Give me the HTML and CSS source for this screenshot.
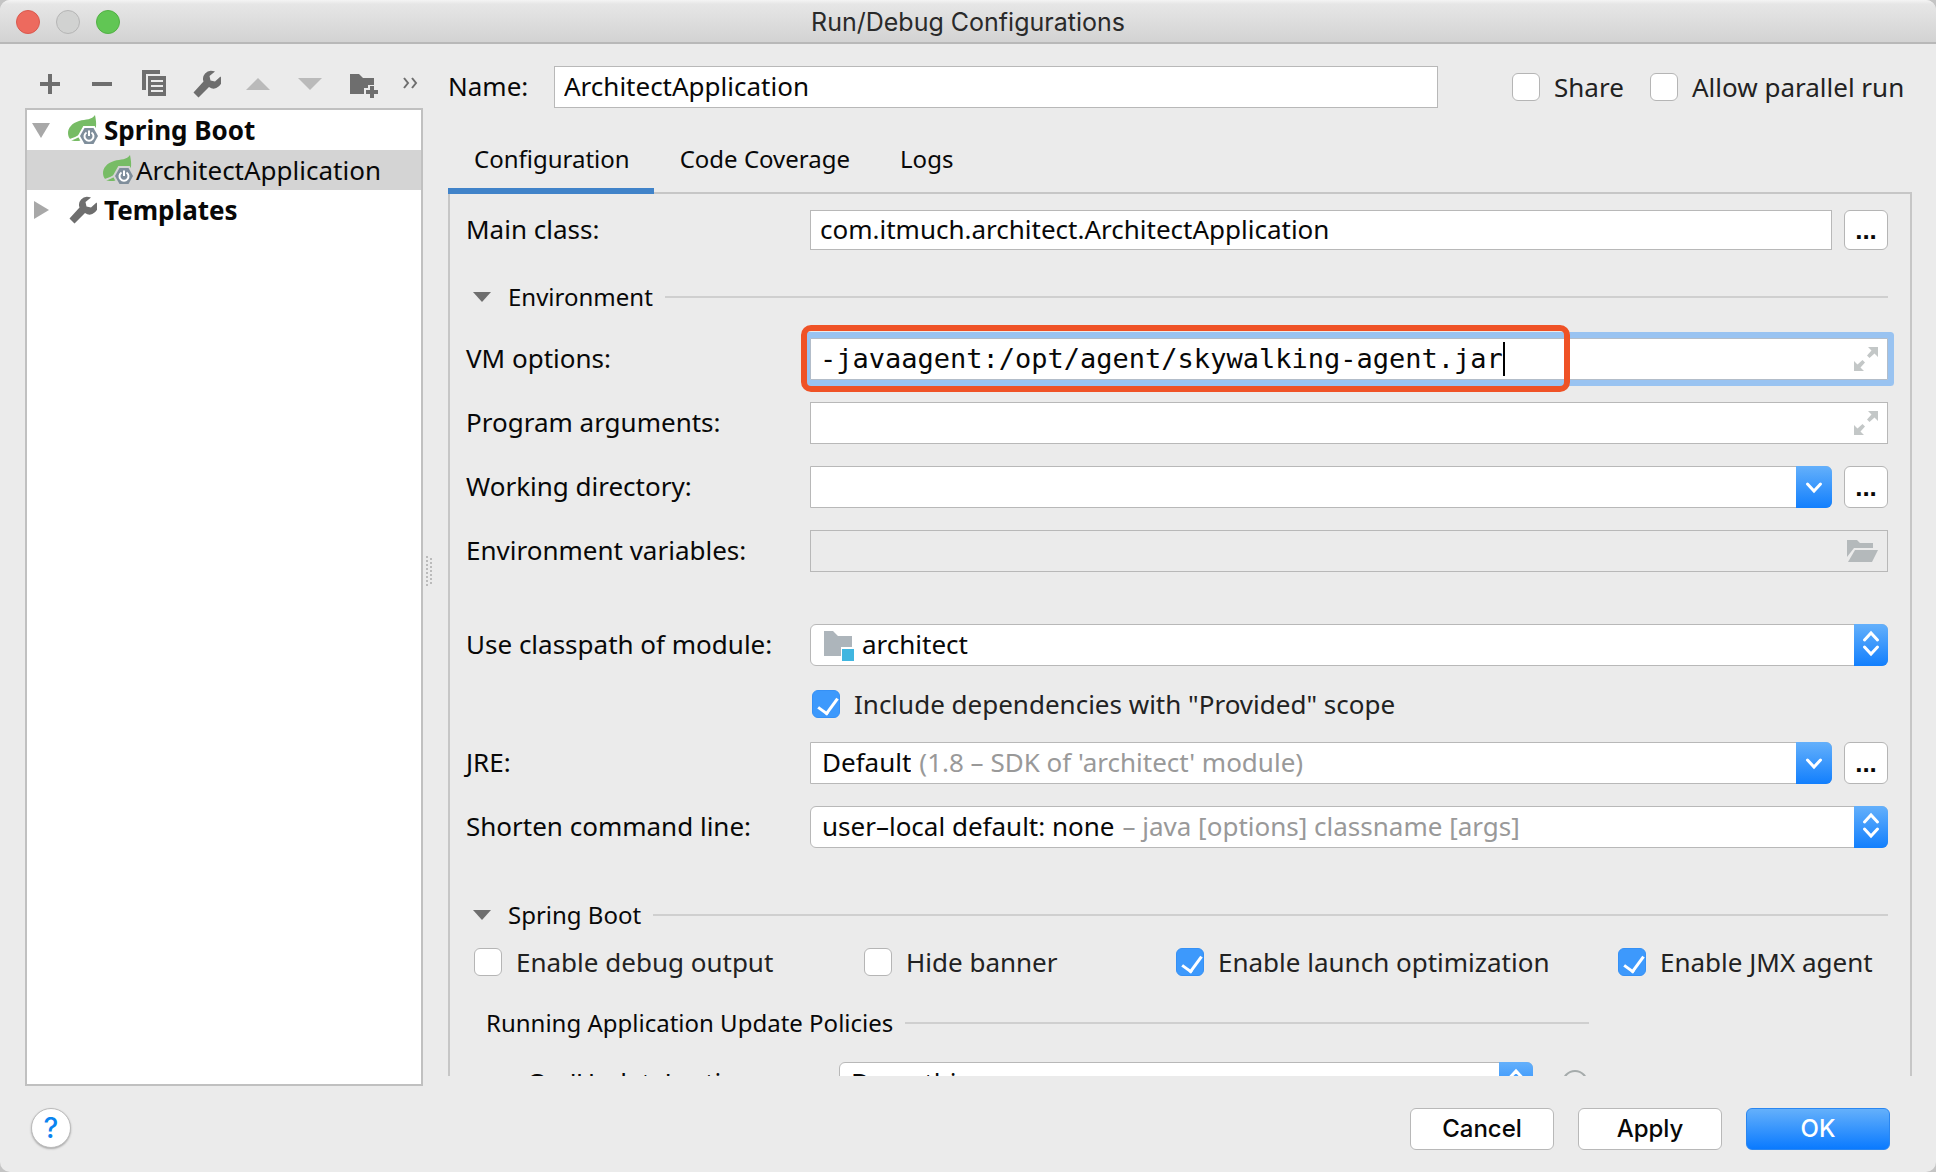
FILE: index.html
```html
<!DOCTYPE html>
<html lang="en">
<head>
    <meta charset="UTF-8">
    <meta name="viewport" content="width=device-width, initial-scale=1.0">
    <title>Run/Debug Configurations</title>
    <link rel="stylesheet" href="styles.css">
</head>
<body>
    <!-- Shared icons -->
    <svg class="sprite" aria-hidden="true">
        <symbol id="wrench" viewBox="0 0 28 28">
            <path d="M20 1 A8 8 0 0 0 10.500 11.500 L0.500 22.500 L5.500 27.500 L16 17 A8 8 0 0 0 27.500 6.500 L22 11.500 L17.500 10.500 L16.500 6 L22 1.500 Z"/>
        </symbol>
        <symbol id="spring" viewBox="0 0 32 32">
            <path class="leaf" d="M27 1 C24 6 18 5 11 7 C4 9 0 14 0 19 C0 22 1 24 3 26 C6 28 20 28 27 17 C29 12 28 6 27 1 Z"/>
            <path class="vein" d="M2 26 C8 24 13 22 17 17"/>
            <path class="hex-gap" d="M16.500 14 H25.500 L30 22 L25.500 30 H16.500 L12 22 Z"/>
            <path class="hex" d="M16.500 14 H25.500 L30 22 L25.500 30 H16.500 L12 22 Z"/>
            <path class="power" d="M18.500 18.500 A4.500 4.500 0 1 0 23.500 18.500 M21 16.500 V22"/>
        </symbol>
        <symbol id="expand" viewBox="0 0 24 24">
            <path d="M14 0 H24 V10 L20.500 6.500 L15.500 11 L13 8.500 L17.500 3.500 Z M0 14 L3.500 17.500 L8.500 13 L11 15.500 L6.500 20.500 L10 24 H0 Z"/>
        </symbol>
        <symbol id="down" viewBox="0 0 18 42">
            <path d="M2.500 18 L9 25 L15.500 18"/>
        </symbol>
        <symbol id="updown" viewBox="0 0 18 42">
            <path d="M2.500 16 L9 9 L15.500 16 M2.500 23 L9 30 L15.500 23"/>
        </symbol>
    </svg>

    <div class="window">
        <header class="titlebar">
            <div class="lights">
                <button class="light red" aria-label="Close"></button>
                <button class="light gray" aria-label="Minimize" disabled></button>
                <button class="light green" aria-label="Zoom"></button>
            </div>
            <h1>Run/Debug Configurations</h1>
        </header>

        <div class="content">
            <aside class="sidebar">
                <div class="toolbar">
                    <button class="tool" aria-label="Add"><svg viewBox="0 0 32 32"><path d="M14 6 H18 V14 H26 V18 H18 V26 H14 V18 H6 V14 H14 Z"/></svg></button>
                    <button class="tool" aria-label="Remove"><svg viewBox="0 0 32 32"><path d="M6 14 H26 V18 H6 Z"/></svg></button>
                    <button class="tool" aria-label="Copy"><svg viewBox="0 0 32 32"><path d="M4 2 H22 V6 H8 V22 H4 Z"/><path fill-rule="evenodd" d="M10 8 H28 V28 H10 Z M13 12 V14 H25 V12 Z M13 17 V19 H25 V17 Z M13 22 V24 H25 V22 Z"/></svg></button>
                    <button class="tool" aria-label="Edit templates"><svg viewBox="0 0 32 32"><use href="#wrench" x="3" y="2" width="28" height="28"/></svg></button>
                    <button class="tool" aria-label="Move up" disabled><svg viewBox="0 0 32 32"><path d="M4 22 L16 10 L28 22 Z"/></svg></button>
                    <button class="tool" aria-label="Move down" disabled><svg viewBox="0 0 32 32"><path d="M4 10 H28 L16 22 Z"/></svg></button>
                    <button class="tool" aria-label="Create folder"><svg viewBox="0 0 32 32"><path d="M4 6 H13 L17 10 H28 V17 H22 V20 H18 V26 H4 Z"/><path d="M24 18 H28 V22 H32 V26 H28 V30 H24 V26 H20 V22 H24 Z"/></svg></button>
                    <button class="tool more" aria-label="More"><svg viewBox="0 0 16 32"><path d="M2 10 L6 15 L2 20 M10 10 L14 15 L10 20"/></svg></button>
                </div>
                <ul class="tree">
                    <li class="node">
                        <svg class="arrow" viewBox="0 0 18 18"><path d="M0 2 H18 L9 17 Z"/></svg>
                        <svg class="node-icon"><use href="#spring"/></svg>
                        <b>Spring Boot</b>
                    </li>
                    <li class="node child selected">
                        <svg class="node-icon"><use href="#spring"/></svg>
                        <span>ArchitectApplication</span>
                    </li>
                    <li class="node">
                        <svg class="arrow" viewBox="0 0 18 18"><path d="M2 0 L17 9 L2 18 Z"/></svg>
                        <svg class="node-icon wrench" viewBox="0 0 32 32"><use href="#wrench" x="1" y="2" width="28" height="28"/></svg>
                        <b>Templates</b>
                    </li>
                </ul>
            </aside>

            <div class="splitter">
                <svg width="8" height="30" viewBox="0 0 8 30"><path d="M2 0 V30 M6 2 V30"/></svg>
            </div>

            <main class="main">
                <div class="name-row">
                    <label for="name">Name:</label>
                    <input class="input" id="name" type="text" value="ArchitectApplication">
                    <div class="name-checks">
                        <label class="check"><input type="checkbox">Share</label>
                        <label class="check"><input type="checkbox">Allow parallel run</label>
                    </div>
                </div>

                <nav class="tabs">
                    <button class="tab active">Configuration</button>
                    <button class="tab">Code Coverage</button>
                    <button class="tab">Logs</button>
                </nav>

                <section class="panel">
                    <div class="row main-class">
                        <label for="main-class">Main class:</label>
                        <div class="field-group">
                            <input class="input" id="main-class" type="text" value="com.itmuch.architect.ArchitectApplication">
                            <button class="browse" aria-label="Browse main class">...</button>
                        </div>
                    </div>

                    <h2 class="section-title">
                        <svg class="fold" viewBox="0 0 18 12"><path d="M0 1 H18 L9 11 Z"/></svg>
                        Environment
                    </h2>

                    <div class="rows">
                        <div class="row">
                            <label for="vm">VM options:</label>
                            <div class="field focused">
                                <input class="mono" id="vm" type="text" value="-javaagent:/opt/agent/skywalking-agent.jar">
                                <span class="caret"></span>
                                <button class="field-icon" aria-label="Expand"><svg width="24" height="24"><use href="#expand"/></svg></button>
                                <span class="highlight"></span>
                            </div>
                        </div>
                        <div class="row">
                            <label for="args">Program arguments:</label>
                            <div class="field">
                                <input class="fill" id="args" type="text">
                                <button class="field-icon" aria-label="Expand"><svg width="24" height="24"><use href="#expand"/></svg></button>
                            </div>
                        </div>
                        <div class="row">
                            <label for="dir">Working directory:</label>
                            <div class="field-group">
                                <div class="field combo">
                                    <input class="fill" id="dir" type="text">
                                    <span class="stepper wide"><svg width="18" height="42"><use href="#down"/></svg></span>
                                </div>
                                <button class="browse" aria-label="Browse working directory">...</button>
                            </div>
                        </div>
                        <div class="row">
                            <label for="env">Environment variables:</label>
                            <div class="field disabled">
                                <input class="fill" id="env" type="text">
                                <button class="field-icon" aria-label="Edit variables">
                                    <svg class="folder-open" width="32" height="26" viewBox="0 0 32 26"><path d="M1 2 H11 L14 5 H27 V10 H8 L1 19 Z"/><path d="M9 12 H32 L26 24 H2 Z"/></svg>
                                </button>
                            </div>
                        </div>
                    </div>

                    <div class="row classpath">
                        <label for="module">Use classpath of module:</label>
                        <div class="field popup">
                            <svg class="module" width="32" height="32" viewBox="0 0 32 32"><path d="M1 2 H10 L15 7 H29 V18 H18 V27 H1 Z"/><path class="badge" d="M19 20 H31 V34 H19 Z"/></svg>
                            <select id="module"><option>architect</option></select>
                            <span class="stepper"><svg width="18" height="42"><use href="#updown"/></svg></span>
                        </div>
                    </div>
                    <div class="row provided">
                        <label class="check"><input type="checkbox" checked>Include dependencies with "Provided" scope</label>
                    </div>
                    <div class="rows">
                        <div class="row">
                            <label for="jre">JRE:</label>
                            <div class="field-group">
                                <div class="field combo">
                                    <select id="jre"><option>Default</option></select>
                                    <span class="hint">(1.8 – SDK of 'architect' module)</span>
                                    <span class="stepper wide"><svg width="18" height="42"><use href="#down"/></svg></span>
                                </div>
                                <button class="browse" aria-label="Browse JRE">...</button>
                            </div>
                        </div>
                        <div class="row">
                            <label for="shorten">Shorten command line:</label>
                            <div class="field popup">
                                <select id="shorten"><option>user–local default: none</option></select>
                                <span class="hint">– java [options] classname [args]</span>
                                <span class="stepper"><svg width="18" height="42"><use href="#updown"/></svg></span>
                            </div>
                        </div>
                    </div>

                    <h2 class="section-title spring-title">
                        <svg class="fold" viewBox="0 0 18 12"><path d="M0 1 H18 L9 11 Z"/></svg>
                        Spring Boot
                    </h2>
                    <div class="checks">
                        <label class="check"><input type="checkbox">Enable debug output</label>
                        <label class="check"><input type="checkbox">Hide banner</label>
                        <label class="check"><input type="checkbox" checked>Enable launch optimization</label>
                        <label class="check"><input type="checkbox" checked>Enable JMX agent</label>
                    </div>

                    <div class="policies">
                        <h3 class="section-title">Running Application Update Policies</h3>
                        <div class="policy">
                            <label for="update">On 'Update' action:</label>
                            <div class="field popup">
                                <select id="update"><option>Do nothing</option></select>
                                <span class="stepper"><svg width="18" height="42"><use href="#updown"/></svg></span>
                            </div>
                            <svg class="info" width="28" height="28" viewBox="0 0 28 28"><circle cx="14" cy="14" r="12"/><path d="M10 12 C10 7 18 7 18 12 C18 14 14 14 14 17 M14 19 V21"/></svg>
                        </div>
                    </div>
                </section>
            </main>
        </div>

        <footer class="footer">
            <button class="help" aria-label="Help">?</button>
            <div class="actions">
                <button class="btn">Cancel</button>
                <button class="btn">Apply</button>
                <button class="btn primary">OK</button>
            </div>
        </footer>
    </div>
</body>
</html>
```

FILE: styles.css
```css
* {
    box-sizing: border-box;
}
body {
    margin: 0;
    background-color: #c4c4c4;
    color: #080808;
    font-family: "Noto Sans", "Open Sans", sans-serif;
    font-size: 26px;
    line-height: 30px;
}
button, input, select {
    font: inherit;
    color: inherit;
    margin: 0;
    padding: 0;
    border: none;
    background: none;
}
h1, h2, h3, ul {
    margin: 0;
    padding: 0;
    font-weight: normal;
}
svg {
    display: block;
    flex: none;
}
.sprite {
    position: absolute;
    width: 0;
    height: 0;
}
.window {
    display: flex;
    flex-direction: column;
    height: 100vh;
    background-color: #ebebeb;
    border-radius: 10px;
    overflow: hidden;
}

/* Title bar */
.titlebar {
    display: grid;
    grid-template-columns: 1fr auto 1fr;
    align-items: center;
    height: 44px;
    padding: 2px 16px 0;
    background: linear-gradient(#f4f4f4, #e6e6e6 10%, #d3d3d3);
    border-bottom: 2px solid #b8b8b8;
}
.titlebar h1 {
    font-family: Inter, "Liberation Sans", sans-serif;
    font-size: 25px;
    color: #2a2a2a;
}
.lights {
    display: flex;
    gap: 16px;
}
.light {
    width: 24px;
    height: 24px;
    border-radius: 50%;
    border: 1px solid;
}
.red {
    background-color: #ed6a5e;
    border-color: #d9594e;
}
.gray {
    background-color: #d1d2d1;
    border-color: #b5b5b5;
}
.green {
    background-color: #61c654;
    border-color: #52b045;
}

/* Left side */
.content {
    display: flex;
    flex: 1;
    min-height: 0;
    padding: 0 24px 0 25px;
}
.sidebar {
    display: flex;
    flex-direction: column;
    width: 398px;
    padding-top: 24px;
}
.toolbar {
    display: flex;
    gap: 20px;
    padding-left: 9px;
    margin-bottom: 8px;
}
.tool {
    width: 32px;
    height: 32px;
}
.tool svg {
    width: 100%;
    height: 100%;
    fill: #6e6e6e;
}
.tool:disabled svg {
    fill: #bababa;
}
.more {
    width: 16px;
    margin-left: 4px;
}
.more svg {
    fill: none;
    stroke: #6e6e6e;
    stroke-width: 2;
}
.tree {
    flex: 1;
    list-style: none;
    background-color: #fff;
    border: 2px solid #c0c0c0;
}
.node {
    --row: #fff;
    display: flex;
    align-items: center;
    height: 40px;
    padding-left: 5px;
    background-color: var(--row);
}
.child {
    padding-left: 76px;
}
.selected {
    --row: #d4d4d4;
}
.arrow {
    width: 18px;
    height: 18px;
    margin-right: 18px;
    fill: #a8a8a8;
}
.node-icon {
    width: 32px;
    height: 32px;
    margin-right: 4px;
}
.child .node-icon {
    margin-right: 1px;
}
.wrench {
    fill: #6e6e6e;
}
.leaf {
    fill: #77bc65;
}
.vein {
    fill: none;
    stroke: var(--row);
    stroke-width: 2;
}
.hex-gap {
    fill: var(--row);
    stroke: var(--row);
    stroke-width: 4;
}
.hex {
    fill: #7f8e9b;
}
.power {
    fill: none;
    stroke: #fff;
    stroke-width: 2;
}
.splitter {
    display: flex;
    align-items: center;
    width: 25px;
    padding: 12px 0 0 2px;
}
.splitter path {
    stroke: #bbb;
    stroke-width: 2;
    stroke-dasharray: 2 2;
}

/* Right side */
.main {
    display: flex;
    flex-direction: column;
    flex: 1;
    min-width: 0;
    padding: 22px 0 10px;
}
label {
    padding-bottom: 2px;
}
.name-row {
    display: flex;
    align-items: center;
    margin-bottom: 18px;
}
.name-row > label {
    width: 106px;
}
.name-row .input {
    flex: 1;
}
.name-checks {
    display: grid;
    grid-template-columns: 138px 262px;
    margin-left: 74px;
}
.input {
    min-width: 0;
    height: 42px;
    padding: 0 9px 2px;
    background-color: #fff;
    border: 1px solid #b8b8b8;
}
.check {
    display: flex;
    align-items: center;
    gap: 14px;
    height: 28px;
    padding-bottom: 0;
    white-space: nowrap;
    color: #222;
}
.check input {
    appearance: none;
    flex: none;
    width: 28px;
    height: 28px;
    background-color: #fff;
    border: 1px solid #b5b5b5;
    border-radius: 6px;
}
.check input:checked {
    position: relative;
    background-color: #3d99fc;
    border-color: #3590f5;
}
.check input:checked::after {
    content: "";
    position: absolute;
    left: 9px;
    top: 3px;
    width: 9px;
    height: 17px;
    border: solid #fff;
    border-width: 0 3px 3px 0;
    transform: rotate(36deg);
}
.tabs {
    display: flex;
    height: 68px;
    font-size: 24px;
    border-bottom: 2px solid #c6c6c6;
}
.tab {
    height: 68px;
    padding: 0 24px 2px 26px;
    border: solid transparent;
    border-width: 6px 0;
}
.tab.active {
    border-bottom-color: #4083c9;
}
.panel {
    flex: 1;
    min-height: 0;
    overflow: hidden;
    padding: 16px 22px 0 16px;
    border: solid #c6c6c6;
    border-width: 0 2px;
}
.rows {
    display: grid;
    gap: 22px;
}
.row {
    display: grid;
    grid-template-columns: 344px 1fr;
    align-items: center;
}
.field-group {
    display: flex;
    gap: 12px;
    min-width: 0;
}
.field-group .input, .field-group .field {
    flex: 1;
}
.main-class .input, .main-class .browse {
    height: 40px;
}
.browse {
    width: 44px;
    height: 42px;
    background-color: #fff;
    border: 1px solid #b5b5b5;
    border-radius: 6px;
    font-family: "Liberation Sans", sans-serif;
    font-weight: bold;
}
.section-title {
    display: flex;
    align-items: center;
    font-size: 24px;
    margin: 32px 0 26px;
}
.section-title::after {
    content: "";
    flex: 1;
    height: 2px;
    margin-left: 12px;
    background-color: #cfcfcf;
}
.fold {
    width: 18px;
    height: 12px;
    margin: 0 17px 0 7px;
    fill: #6e6e6e;
}
.field {
    position: relative;
    display: flex;
    align-items: center;
    min-width: 0;
    height: 42px;
    padding-left: 9px;
    background-color: #fff;
    border: 1px solid #b8b8b8;
}
.field input, .field select {
    appearance: none;
    outline: none;
    min-width: 0;
    height: 40px;
    padding-bottom: 2px;
}
.field .fill {
    flex: 1;
}
.field select {
    field-sizing: content;
    padding-left: 2px;
}
.mono {
    field-sizing: content;
    font-family: "DejaVu Sans Mono", monospace;
    font-size: 27px;
}
.caret {
    width: 2px;
    height: 34px;
    background-color: #000;
}
.field-icon {
    margin-left: auto;
    margin-right: 9px;
}
.field-icon svg {
    fill: #c3c7c7;
}
.field-icon .folder-open {
    fill: #b4b9bb;
}
.focused {
    border-color: #b3bdc9;
    box-shadow: 0 0 0 6px #99c3f1;
    border-radius: 1px;
}
/* Red frame round the typed option */
.highlight {
    position: absolute;
    top: -14px;
    left: -10px;
    width: 769px;
    height: 67px;
    border: 6px solid #ef5226;
    border-radius: 10px;
    pointer-events: none;
}
.disabled {
    background-color: #ebebeb;
}
.combo {
    border-radius: 0 6px 6px 0;
}
.popup {
    border-radius: 6px;
}
.stepper {
    display: flex;
    justify-content: center;
    align-items: center;
    width: 34px;
    height: 42px;
    margin: -1px -1px -1px auto;
    background: linear-gradient(#64b0fb, #127ffd);
    border-radius: 0 6px 6px 0;
}
.stepper.wide {
    width: 36px;
}
.stepper svg {
    fill: none;
    stroke: #fff;
    stroke-width: 3;
    stroke-linecap: round;
}
.hint {
    margin-left: 8px;
    padding-bottom: 2px;
    color: #999;
    white-space: nowrap;
}
.classpath {
    margin-top: 52px;
}
.module {
    margin: 0 5px 0 3px;
    fill: #adb5bb;
}
.module .badge {
    fill: #40b6e0;
}
.provided {
    margin: 24px 0;
}
.provided .check {
    grid-column: 2;
    padding-left: 2px;
}
.spring-title {
    margin: 52px 0 18px;
}
.checks {
    display: grid;
    grid-template-columns: 390fr 312fr 442fr 270fr;
    padding-left: 8px;
}
.policies {
    width: 79%;
    padding-left: 20px;
}
.policies .section-title {
    margin: 32px 0 24px;
}
.policy {
    display: grid;
    grid-template-columns: 312px 1fr 28px;
    align-items: center;
    padding-left: 41px;
}
.policy .info {
    justify-self: end;
}
.policy .field {
    margin-right: 28px;
}
.info {
    fill: none;
    stroke: #a5abab;
    stroke-width: 2;
}

/* Bottom bar */
.footer {
    display: flex;
    justify-content: space-between;
    align-items: flex-start;
    height: 86px;
    padding: 22px 46px 0 31px;
}
.help {
    width: 40px;
    height: 40px;
    background-color: #fff;
    border: 1px solid #bbb;
    border-radius: 50%;
    box-shadow: 0 1px 2px #aaa;
    color: #0a84f0;
    font-family: Inter, "Liberation Sans", sans-serif;
    font-weight: 500;
    font-size: 28px;
}
.actions {
    display: flex;
    gap: 24px;
}
.btn {
    width: 144px;
    height: 42px;
    background-color: #fff;
    border: 1px solid #b8b8b8;
    border-radius: 6px;
    font-family: Inter, "Liberation Sans", sans-serif;
    font-weight: 500;
    font-size: 24px;
}
.primary {
    background: linear-gradient(#64b0fb, #0a7aff);
    border-color: #2a86f0;
    color: #fff;
}
```
